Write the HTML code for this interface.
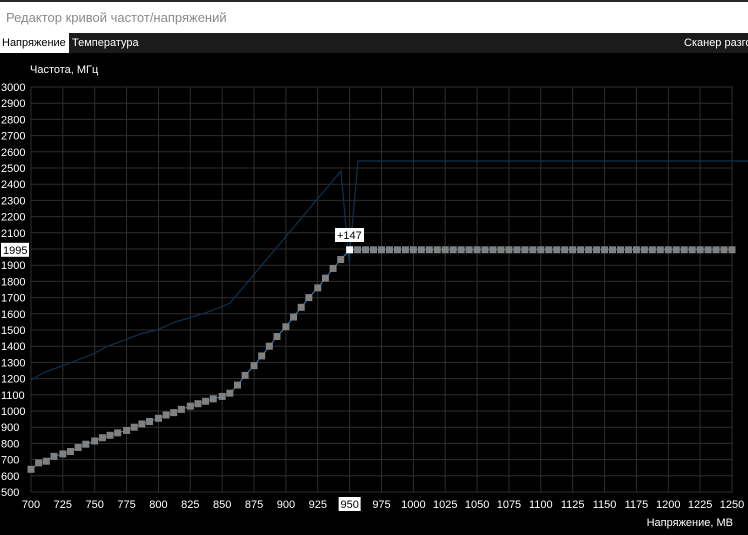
<!DOCTYPE html>
<html><head><meta charset="utf-8"><style>
body{margin:0;width:748px;height:535px;background:#000;overflow:hidden;font-family:"Liberation Sans",sans-serif;position:relative}
.title{position:absolute;left:0;top:0;width:748px;height:33px;background:#fff;border-top:2px solid #2a2a2a;box-sizing:border-box}
.title span{position:absolute;left:6px;top:8px;font-size:13px;color:#8a8a8a}
.tabs{position:absolute;left:0;top:33px;width:748px;height:20px;background:#1b1b1b;font-size:11px;color:#fff}
.tabs span{position:absolute;top:4px;white-space:nowrap}
</style></head><body>
<div class="title"><span>Редактор кривой частот/напряжений</span></div>
<div class="tabs"><div style="position:absolute;left:0;top:0;width:69px;height:20px;background:#fff"></div><span style="left:2px;color:#000">Напряжение</span><span style="left:72px">Температура</span><span style="left:684px">Сканер разгона</span></div>
<svg id="s" width="748" height="535" style="position:absolute;left:0;top:0" font-family="Liberation Sans, sans-serif" font-size="11"></svg>
<script>
var s=document.getElementById('s'),h='';
function X(v){return 31+(v-700)*701/550}
function Y(f){return 492-(f-500)*405/2500}
h+='<text x="30" y="73" fill="#fff">Частота, МГц</text>';
for(var f=500;f<=3000;f+=100){var y=Y(f);h+='<line x1="31" x2="733" y1="'+y+'" y2="'+y+'" stroke="#2e2e2e"/>';if(f!=2000)h+='<text x="1" y="'+(y+4)+'" fill="#fff">'+f+'</text>';}
for(var v=700;v<=1250;v+=25){var x=X(v);h+='<line y1="87" y2="492" x1="'+x+'" x2="'+x+'" stroke="#2e2e2e"/>';
if(v==950){h+='<rect x="'+(x-11)+'" y="497" width="22" height="14" fill="#fff"/><text x="'+x+'" y="508" fill="#000" text-anchor="middle">950</text>'}else h+='<text x="'+x+'" y="508" fill="#fff" text-anchor="middle">'+v+'</text>';}
h+='<text x="733" y="526" fill="#fff" text-anchor="end">Напряжение, МВ</text>';
h+='<polyline fill="none" stroke="#0c3352" stroke-width="1.2" points="31,380 45,372 62,366 80,359 93,354 108,346 125,340 140,334 157,330 175,322 189,318 205,313 221,307 230,303 341,171 349,262 358,161 748,161"/>';
var pts=[[700,640],[706,680],[712,690],[718,720],[725,735],[731,750],[737,775],[743,795],[750,815],[756,835],[762,850],[768,865],[775,880],[781,900],[787,920],[793,935],[800,955],[806,975],[812,990],[818,1010],[825,1030],[831,1045],[837,1060],[843,1075],[850,1090],[856,1110],[862,1160],[868,1220],[875,1280],[881,1340],[887,1400],[893,1460],[900,1520],[906,1580],[912,1640],[918,1700],[925,1760],[931,1820],[937,1880],[943,1935],[950,1995]];
for(var v=956.25;v<=1250;v+=6.25)pts.push([v,1995]);
h+='<polyline fill="none" stroke="#1e90d8" stroke-width="1" points="'+pts.map(function(p){return X(p[0])+','+Y(p[1])}).join(' ')+'"/>';
pts.forEach(function(p){var c=p[0]==950?'#fff':'#808080';h+='<rect x="'+(X(p[0])-3.5)+'" y="'+(Y(p[1])-3.5)+'" width="7" height="7" fill="'+c+'"/>'});
var y=Y(1995);h+='<rect x="1" y="'+(y-7)+'" width="28" height="14" fill="#fff"/><text x="3" y="'+(y+4)+'" fill="#000">1995</text>';
h+='<rect x="335" y="228" width="29" height="14" fill="#fff"/><text x="337" y="239" fill="#000">+147</text>';
s.innerHTML=h;
</script>
</body></html>
